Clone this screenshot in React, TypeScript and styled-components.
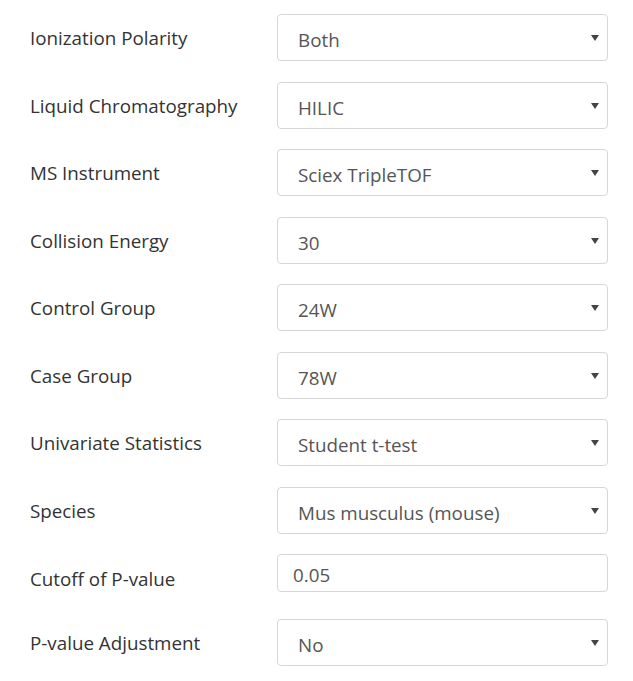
import React from "react";
import styled, { createGlobalStyle } from "styled-components";

const GlobalStyle = createGlobalStyle`
  html, body { margin: 0; padding: 0; background: #fff; }
  body { font-family: "Open Sans", "Noto Sans", sans-serif; }
`;

const Form = styled.form`
  display: flex;
  flex-direction: column;
  padding: 14px 0 0 30px;
  width: 578px;
`;

const Row = styled.div<{ $gap: number }>`
  display: flex;
  align-items: flex-start;
  margin-bottom: ${(p) => p.$gap}px;
`;

const Label = styled.label<{ $pad: number }>`
  width: 247px;
  flex: none;
  padding-top: ${(p) => p.$pad}px;
  font-size: 18.8px;
  line-height: 24px;
  color: #333;
`;

const SelectWrap = styled.div`
  position: relative;
  width: 331px;
  flex: none;
  &::after {
    content: "";
    position: absolute;
    right: 9px;
    top: 21px;
    border-left: 4px solid transparent;
    border-right: 4px solid transparent;
    border-top: 6px solid #444;
    pointer-events: none;
  }
`;

const Select = styled.select`
  appearance: none;
  -webkit-appearance: none;
  display: block;
  width: 100%;
  height: 47px;
  box-sizing: border-box;
  padding: 4px 24px 0 20px;
  border: 1px solid #d7d7d7;
  border-radius: 4px;
  background: #fff;
  font-family: "Open Sans", "Noto Sans", sans-serif;
  font-size: 18.8px;
  color: #555;
  outline: none;
`;

const Input = styled.input`
  display: block;
  width: 331px;
  height: 38px;
  box-sizing: border-box;
  padding: 3px 15px 0 15px;
  border: 1px solid #d7d7d7;
  border-radius: 4px;
  background: #fff;
  font-family: "Open Sans", "Noto Sans", sans-serif;
  font-size: 18.8px;
  color: #555;
  outline: none;
`;

type Field = {
  label: string;
  kind: "select" | "input";
  value: string;
  gap: number;
};

const fields: Field[] = [
  { label: "Ionization Polarity", kind: "select", value: "Both", gap: 21 },
  { label: "Liquid Chromatography", kind: "select", value: "HILIC", gap: 20 },
  { label: "MS Instrument", kind: "select", value: "Sciex TripleTOF", gap: 21 },
  { label: "Collision Energy", kind: "select", value: "30", gap: 20 },
  { label: "Control Group", kind: "select", value: "24W", gap: 21 },
  { label: "Case Group", kind: "select", value: "78W", gap: 20 },
  { label: "Univariate Statistics", kind: "select", value: "Student t-test", gap: 21 },
  { label: "Species", kind: "select", value: "Mus musculus (mouse)", gap: 20 },
  { label: "Cutoff of P-value", kind: "input", value: "0.05", gap: 27 },
  { label: "P-value Adjustment", kind: "select", value: "No", gap: 0 },
];

export default function App() {
  return (
    <>
      <GlobalStyle />
      <Form onSubmit={(e) => e.preventDefault()}>
        {fields.map((f) => (
          <Row key={f.label} $gap={f.gap}>
            <Label $pad={f.kind === "input" ? 13 : 12}>{f.label}</Label>
            {f.kind === "select" ? (
              <SelectWrap>
                <Select defaultValue={f.value}>
                  <option value={f.value}>{f.value}</option>
                </Select>
              </SelectWrap>
            ) : (
              <Input defaultValue={f.value} />
            )}
          </Row>
        ))}
      </Form>
    </>
  );
}
